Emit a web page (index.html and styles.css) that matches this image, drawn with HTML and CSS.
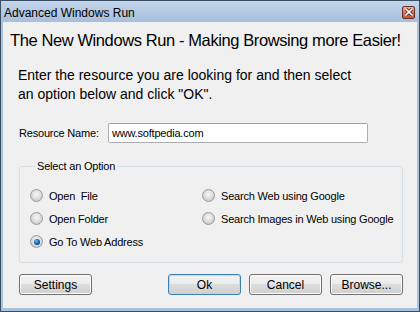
FILE: index.html
```html
<!DOCTYPE html>
<html>
<head>
<meta charset="utf-8">
<link rel="stylesheet" href="styles.css">
</head>
<body>
<div class="window">
  <div class="titlebar">
    <span class="title">Advanced Windows Run</span>
    <span class="close"><svg width="8" height="8" viewBox="0 0 8 8"><path d="M1 1L7 7M7 1L1 7" stroke="#5a2418" stroke-width="3.2" stroke-linecap="square"/><path d="M1 1L7 7M7 1L1 7" stroke="#fff" stroke-width="1.6" stroke-linecap="square"/></svg></span>
  </div>
  <div class="client">
    <h1 class="heading">The New Windows Run - Making Browsing more Easier!</h1>
    <p class="intro">Enter the resource you are looking for and then select<br>an option below and click "OK".</p>
    <div class="field">
      <span class="label">Resource Name:</span>
      <div class="input">www.softpedia.com</div>
    </div>
    <fieldset class="group">
      <legend class="legend">Select an Option</legend>
      <div class="options">
        <div class="option"><span class="radio"></span><span>Open&nbsp; File</span></div>
        <div class="option"><span class="radio"></span><span>Search Web using Google</span></div>
        <div class="option"><span class="radio"></span><span>Open Folder</span></div>
        <div class="option"><span class="radio"></span><span>Search Images in Web using Google</span></div>
        <div class="option"><span class="radio checked"></span><span>Go To Web Address</span></div>
      </div>
    </fieldset>
    <div class="buttons">
      <button class="btn">Settings</button>
      <div class="btn-group">
        <button class="btn default">Ok</button>
        <button class="btn">Cancel</button>
        <button class="btn">Browse...</button>
      </div>
    </div>
  </div>
</div>
</body>
</html>
```
FILE: styles.css
```css
* { box-sizing: border-box; }
html, body { margin: 0; padding: 0; }
body {
  width: 420px;
  height: 312px;
  overflow: hidden;
  font-family: "Liberation Sans", Arial, sans-serif;
  color: #000;
}
.window {
  width: 420px;
  height: 312px;
  border: 1px solid #3a4f66;
  background: #a8c2de;
  display: flex;
  flex-direction: column;
}
.titlebar {
  height: 21px;
  flex: none;
  display: flex;
  align-items: center;
  justify-content: space-between;
  padding: 0 4px 0 3px;
  background: linear-gradient(#c3d5ea, #a6bfdc);
}
.title {
  font-size: 12px;
  line-height: 14px;
  margin-top: 2px;
  color: #000;
}
.close {
  width: 13px;
  height: 13px;
  margin-top: 1px;
  border: 1px solid #6b2d20;
  border-radius: 2px;
  background: linear-gradient(#eab0a0, #d27a62 50%, #c2583c);
  display: flex;
  align-items: center;
  justify-content: center;
}
.close svg { display: block; }
.client {
  flex: 1;
  margin: 0 2px 3px 2px;
  background: #f0f0f0;
  padding: 7px 13px 0 16px;
  display: flex;
  flex-direction: column;
}
.heading {
  margin: 0 0 0 -9px;
  font-size: 16.5px;
  letter-spacing: -0.4px;
  line-height: 22px;
  font-weight: normal;
  white-space: nowrap;
}
.intro {
  margin: 15px 0 0 -1px;
  font-size: 14px;
  line-height: 19px;
}
.field {
  display: flex;
  align-items: center;
  margin-top: 19px;
  font-size: 11px;
  letter-spacing: -0.2px;
}
.label {
  width: 89px;
  flex: none;
}
.input {
  width: 260px;
  height: 20px;
  background: #fff;
  border: 1px solid #abadb3;
  border-top-color: #9fa1a7;
  border-radius: 2px;
  padding: 0 0 0 3px;
  line-height: 18px;
  font-size: 11px;
}
.group {
  margin: 17px 0 0 0;
  width: 384px;
  border: 1px solid #d5dfe5;
  border-radius: 3px;
  padding: 11px 0 9px 10px;
  font-size: 11px;
}
.legend {
  padding: 0 2px 0 1px;
  margin-left: 6px;
  line-height: 13px;
  font-size: 11px;
  letter-spacing: -0.2px;
}
.options {
  display: grid;
  grid-template-columns: 172px 1fr;
  grid-auto-rows: 23px;
}
.option {
  display: flex;
  align-items: center;
  gap: 6px;
  white-space: nowrap;
  font-size: 11px;
  letter-spacing: -0.2px;
}
.radio {
  width: 13px;
  height: 13px;
  flex: none;
  border-radius: 50%;
  border: 1px solid #9a9a9a;
  background: radial-gradient(circle at 50% 40%, #f6f6f6 0, #e6e6e6 3px, #cfcfcf 6px);
  display: flex;
  align-items: center;
  justify-content: center;
}
.radio.checked::after {
  content: "";
  width: 6px;
  height: 6px;
  border-radius: 50%;
  background: radial-gradient(circle at 40% 35%, #7cc4f5 0, #1c76c8 2px, #0b3f86 4px);
}
.buttons {
  display: flex;
  justify-content: space-between;
  margin-top: 11px;
  width: 384px;
}
.btn-group {
  display: flex;
  gap: 8px;
}
.btn {
  width: 73px;
  height: 21px;
  padding: 0;
  border: 1px solid #707070;
  border-radius: 3px;
  background: linear-gradient(#f3f3f3, #ebebeb 50%, #dddddd 50%, #cfcfcf);
  font-family: "Liberation Sans", Arial, sans-serif;
  font-size: 12px;
  color: #000;
  box-shadow: inset 0 0 0 1px #fcfcfc;
}
.btn.default {
  border-color: #3c7fb1;
  box-shadow: inset 0 0 0 1px #a7e0f8;
}
```
